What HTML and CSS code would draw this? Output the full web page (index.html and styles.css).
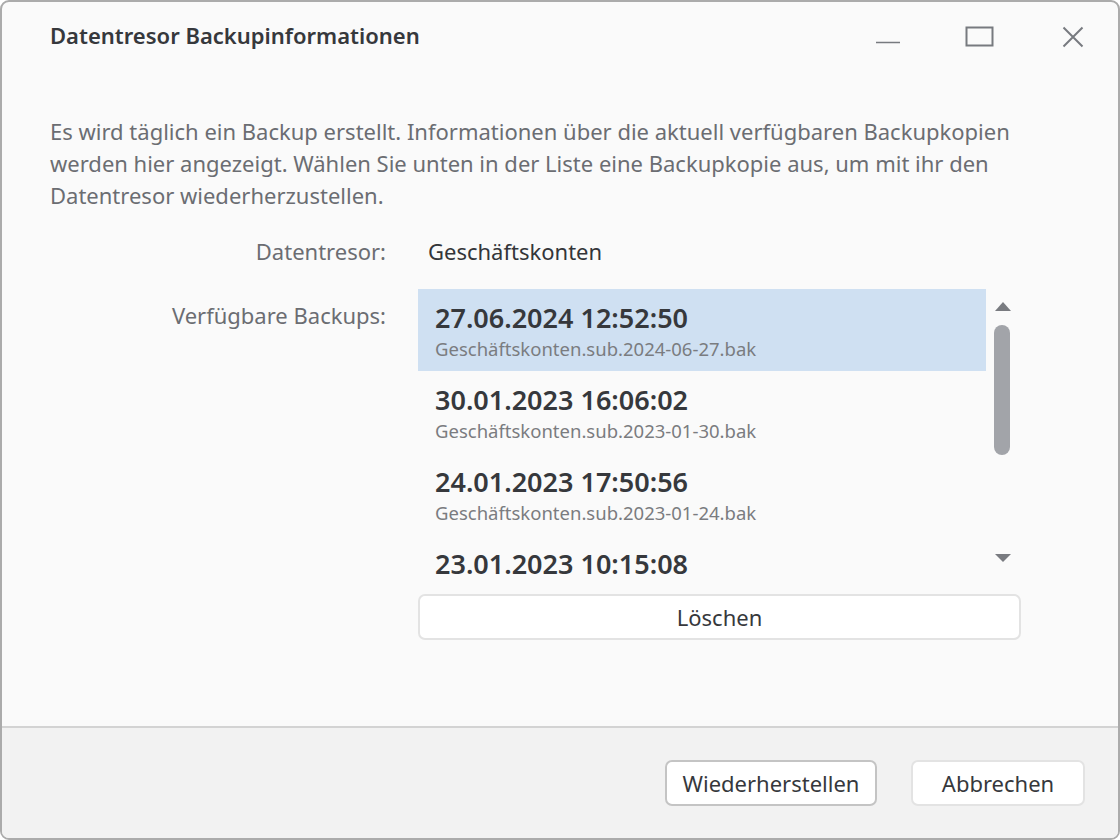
FILE: index.html
```html
<!DOCTYPE html>
<html lang="de">
  <head>
    <meta charset="UTF-8" />
    <title>Datentresor Backupinformationen</title>
    <link rel="stylesheet" href="styles.css">
  </head>
  <body>
    <div class="window">
      <div class="titlebar">
        <div class="title">Datentresor Backupinformationen</div>
        <div class="controls">
          <div class="ctrl ctrl-min">
            <svg width="26" height="20" viewBox="0 0 26 20"><line x1="1" y1="15.5" x2="25" y2="15.5" stroke="#777a7f" stroke-width="1.5"/></svg>
          </div>
          <div class="ctrl ctrl-max">
            <svg width="30" height="22" viewBox="0 0 30 22"><rect x="1.5" y="1.5" width="26" height="18" fill="none" stroke="#777a7f" stroke-width="2"/></svg>
          </div>
          <div class="ctrl ctrl-close">
            <svg width="22" height="22" viewBox="0 0 22 22"><path d="M1.5 1.5 L20.5 20.5 M20.5 1.5 L1.5 20.5" stroke="#777a7f" stroke-width="2"/></svg>
          </div>
        </div>
      </div>

      <div class="content">
        <p class="intro">
          Es wird täglich ein Backup erstellt. Informationen über die aktuell verfügbaren Backupkopien
          werden hier angezeigt. Wählen Sie unten in der Liste eine Backupkopie aus, um mit ihr den
          Datentresor wiederherzustellen.
        </p>

        <div class="form">
          <div class="label">Datentresor:</div>
          <div class="value">Geschäftskonten</div>

          <div class="label label-list">Verfügbare Backups:</div>
          <div class="list-col">
            <div class="list-box">
              <div class="list-items">
                <div class="item item-selected">
                  <div class="item-date">27.06.2024 12:52:50</div>
                  <div class="item-file">Geschäftskonten.sub.2024-06-27.bak</div>
                </div>
                <div class="item">
                  <div class="item-date">30.01.2023 16:06:02</div>
                  <div class="item-file">Geschäftskonten.sub.2023-01-30.bak</div>
                </div>
                <div class="item">
                  <div class="item-date">24.01.2023 17:50:56</div>
                  <div class="item-file">Geschäftskonten.sub.2023-01-24.bak</div>
                </div>
                <div class="item">
                  <div class="item-date">23.01.2023 10:15:08</div>
                </div>
              </div>
              <div class="scrollbar">
                <div class="arrow arrow-up"></div>
                <div class="thumb"></div>
                <div class="track"></div>
                <div class="arrow arrow-down"></div>
              </div>
            </div>
            <button class="btn btn-wide">Löschen</button>
          </div>
        </div>
      </div>

      <div class="footer">
        <button class="btn btn-default">Wiederherstellen</button>
        <button class="btn btn-cancel">Abbrechen</button>
      </div>
    </div>
  </body>
</html>
```

FILE: styles.css
```css
html,
body {
  margin: 0;
  padding: 0;
  background: #ffffff;
}
body {
  font-family: "Noto Sans", "Open Sans", sans-serif;
  color: #333539;
}
.window {
  width: 1120px;
  height: 840px;
  box-sizing: border-box;
  border: 2px solid #ababab;
  border-radius: 9px;
  background: #fafafa;
  display: flex;
  flex-direction: column;
  overflow: hidden;
}
.titlebar {
  height: 70px;
  display: flex;
  align-items: center;
  padding-left: 48px;
}
.title {
  flex: 1;
  font-size: 22px;
  font-weight: 600;
  color: #36383c;
  margin-top: -5px;
}
.controls {
  display: flex;
  align-items: center;
  padding-right: 34px;
}
.ctrl {
  display: flex;
  align-items: center;
  justify-content: center;
}
.ctrl-min {
  margin-right: 64px;
}
.ctrl-max {
  margin-right: 67px;
}
.content {
  flex: 1;
  padding: 43px 0 0 48px;
}
.intro {
  margin: 0;
  width: 1020px;
  font-size: 22px;
  line-height: 32px;
  color: #6b6d72;
}
.form {
  display: grid;
  grid-template-columns: 336px 603px;
  column-gap: 32px;
  row-gap: 22px;
  margin-top: 24px;
}
.label {
  text-align: right;
  font-size: 22px;
  line-height: 32px;
  color: #6b6d72;
}
.label-list {
  padding-top: 10px;
}
.value {
  padding-left: 10px;
  font-size: 22px;
  line-height: 32px;
  color: #333539;
}
.list-box {
  display: flex;
  height: 296px;
}
.list-items {
  flex: 1;
  overflow: hidden;
}
.item {
  height: 82px;
  box-sizing: border-box;
  padding: 11px 0 0 17px;
}
.item-selected {
  background: #cfe0f2;
}
.item-date {
  font-size: 27px;
  font-weight: 600;
  line-height: 36px;
  color: #36383c;
}
.item-file {
  font-size: 18.5px;
  line-height: 26px;
  color: #7a7c80;
}
.scrollbar {
  width: 35px;
  display: flex;
  flex-direction: column;
  align-items: center;
  padding-top: 13px;
  box-sizing: border-box;
}
.arrow {
  width: 0;
  height: 0;
  border-left: 8px solid transparent;
  border-right: 8px solid transparent;
  margin-left: -2px;
}
.arrow-up {
  border-bottom: 9px solid #797b80;
}
.arrow-down {
  border-top: 8px solid #797b80;
  margin-bottom: 23px;
}
.thumb {
  width: 16px;
  height: 130px;
  margin-top: 14px;
  margin-left: -3px;
  border-radius: 8px;
  background: #a2a4a9;
}
.track {
  flex: 1;
}
.btn {
  font-family: "Noto Sans", "Open Sans", sans-serif;
  font-size: 22px;
  color: #36383c;
  background: #ffffff;
  border: 2px solid #e3e3e3;
  border-radius: 7px;
  height: 46px;
  padding: 0;
  cursor: pointer;
}
.btn-wide {
  width: 603px;
  margin-top: 9px;
}
.footer {
  height: 112px;
  box-sizing: border-box;
  border-top: 2px solid #d3d3d3;
  background: #f2f2f2;
  display: flex;
  align-items: center;
  justify-content: flex-end;
  gap: 34px;
  padding-right: 33px;
}
.btn-default {
  width: 212px;
  border-color: #c4c4c4;
}
.btn-cancel {
  width: 174px;
}
```
